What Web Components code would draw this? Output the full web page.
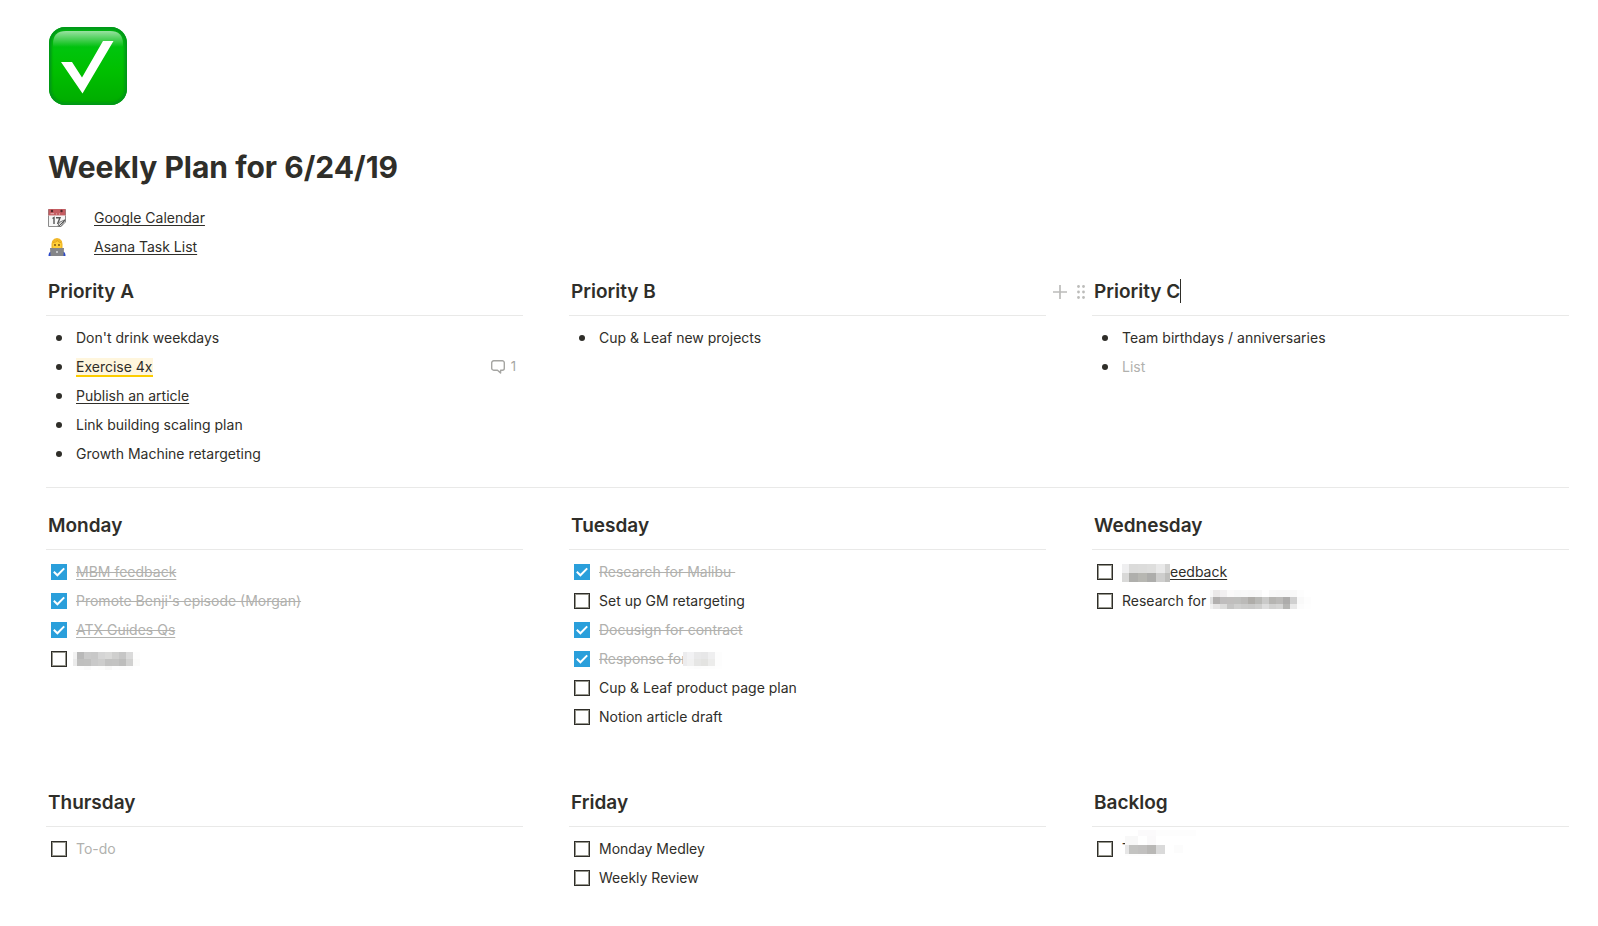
<!DOCTYPE html>
<html lang="en">
<head>
<meta charset="utf-8">
<meta name="viewport" content="width=device-width, initial-scale=1">
<title>Weekly Plan for 6/24/19</title>
<style>
body {
    margin: 0;
    background: #fff;
    color: #2f2e29;
    font: 14px/29px Inter, "Liberation Sans", sans-serif;
    --muted: #b1b1ae;
    --rule: #e9e9e8;
    --blue: #2a9fdb;
}
a {
    color: inherit;
    text-underline-offset: 2px;
    text-decoration-thickness: 1px;
    text-decoration-skip-ink: none;
}
.highlight {
    background: #fff6dd;
    border-bottom: 2px solid #fccd00;
}
.placeholder {
    color: var(--muted);
}
</style>
</head>
<body>

<plan-page>
    <check-icon slot="icon"></check-icon>
    <span slot="title">Weekly Plan for 6/24/19</span>

    <link-row>
        <calendar-icon slot="icon"></calendar-icon>
        <a href="#calendar">Google Calendar</a>
    </link-row>
    <link-row>
        <worker-icon slot="icon"></worker-icon>
        <a href="#asana">Asana Task List</a>
    </link-row>

    <plan-row class="priorities">
        <plan-column>
            <span slot="heading">Priority A</span>
            <bullet-item>Don't drink weekdays</bullet-item>
            <bullet-item><span class="highlight">Exercise 4x</span><comment-count slot="end">1</comment-count></bullet-item>
            <bullet-item><a href="#article">Publish an article</a></bullet-item>
            <bullet-item>Link building scaling plan</bullet-item>
            <bullet-item>Growth Machine retargeting</bullet-item>
        </plan-column>
        <plan-column>
            <span slot="heading">Priority B</span>
            <bullet-item>Cup &amp; Leaf new projects</bullet-item>
        </plan-column>
        <plan-column editing>
            <span slot="heading">Priority C</span>
            <bullet-item>Team birthdays / anniversaries</bullet-item>
            <bullet-item><span class="placeholder">List</span></bullet-item>
        </plan-column>
    </plan-row>

    <section-divider></section-divider>

    <plan-row class="days">
        <plan-column>
            <span slot="heading">Monday</span>
            <todo-item checked><a href="#mbm">MBM feedback</a></todo-item>
            <todo-item checked>Promote Benji's episode (Morgan)</todo-item>
            <todo-item checked><a href="#atx">ATX Guides Qs</a></todo-item>
            <todo-item><pixel-mosaic name="monday"></pixel-mosaic></todo-item>
        </plan-column>
        <plan-column>
            <span slot="heading">Tuesday</span>
            <todo-item checked>Research for Malibu&nbsp;</todo-item>
            <todo-item>Set up GM retargeting</todo-item>
            <todo-item checked>Docusign for contract</todo-item>
            <todo-item checked>Response for<pixel-mosaic name="response"></pixel-mosaic></todo-item>
            <todo-item>Cup &amp; Leaf product page plan</todo-item>
            <todo-item>Notion article draft</todo-item>
        </plan-column>
        <plan-column>
            <span slot="heading">Wednesday</span>
            <todo-item><pixel-mosaic name="feedback"></pixel-mosaic><a href="#feedback">eedback</a></todo-item>
            <todo-item>Research for <pixel-mosaic name="research"></pixel-mosaic></todo-item>
        </plan-column>
    </plan-row>

    <plan-row class="rest">
        <plan-column>
            <span slot="heading">Thursday</span>
            <todo-item><span class="placeholder">To-do</span></todo-item>
        </plan-column>
        <plan-column>
            <span slot="heading">Friday</span>
            <todo-item>Monday Medley</todo-item>
            <todo-item>Weekly Review</todo-item>
        </plan-column>
        <plan-column>
            <span slot="heading">Backlog</span>
            <todo-item>T<pixel-mosaic name="backlog"></pixel-mosaic></todo-item>
        </plan-column>
    </plan-row>
</plan-page>

<script>
class Base extends HTMLElement{

    connectedCallback(){
        if(this.shadowRoot){
            return
        }
        this.$ = this.attachShadow({mode:'open'})
        this.$.innerHTML = this.html
    }
}


class PlanPage extends Base{

    get html(){
        return `
        <main>
            <slot name="icon"></slot>
            <h1><slot name="title"></slot></h1>
            <slot></slot>
        </main>
        <style>
        :host {
            display: block;
        }
        main {
            padding: 27px 29px 20px 46px;
        }
        h1 {
            margin: 43px 2px 17px;
            font-size: 30px;
            line-height: 38px;
            font-weight: 700;
        }
        </style>
        `
    }
}


class LinkRow extends Base{

    get html(){
        return `
        <slot name="icon"></slot>
        <slot></slot>
        <style>
        :host {
            display: grid;
            grid-template-columns: 18px 1fr;
            align-items: center;
            column-gap: 28px;
            min-height: 29px;
            padding: 0 2px;
        }
        </style>
        `
    }
}


class PlanRow extends Base{

    get html(){
        return `
        <slot></slot>
        <style>
        :host {
            display: grid;
            grid-template-columns: repeat(3, minmax(0, 1fr));
            column-gap: 46px;
        }
        :host(.priorities) {
            margin-top: 18px;
        }
        :host(.rest) {
            margin-top: 59px;
        }
        </style>
        `
    }
}


class PlanColumn extends Base{

    get html(){
        const editing = this.hasAttribute('editing')
        return `
        <header>
            ${editing ? this.tools : ''}
            <h2><slot name="heading"></slot></h2>
            ${editing ? '<i class="caret"></i>' : ''}
        </header>
        <div class="list"><slot></slot></div>
        <style>
        :host {
            display: block;
        }
        header {
            position: relative;
            display: flex;
            padding: 0 2px 10px;
            border-bottom: 1px solid var(--rule);
        }
        h2 {
            margin: 0;
            font-size: 19px;
            line-height: 26px;
            font-weight: 600;
        }
        .caret {
            width: 1px;
            height: 24px;
            background: #2f2e29;
        }
        .list {
            padding-top: 7px;
        }
        .tools {
            position: absolute;
            top: 0;
            right: 100%;
            height: 26px;
            display: flex;
            align-items: center;
            gap: 10px;
            padding-right: 7px;
            color: #bcbcba;
        }
        button {
            display: block;
            padding: 0;
            border: 0;
            background: none;
            color: inherit;
            cursor: pointer;
        }
        svg {
            display: block;
        }
        </style>
        `
    }


    get tools(){
        return `
        <div class="tools">
            <button type="button" aria-label="Add block">
                <svg width="14" height="14" viewBox="0 0 14 14" fill="none" stroke="currentColor" stroke-width="1.7"><path d="M7 0v14M0 7h14"/></svg>
            </button>
            <button type="button" aria-label="Drag block">
                <svg width="8" height="14" viewBox="0 0 8 14" fill="currentColor">
                    <circle cx="1.5" cy="1.5" r="1.4"/><circle cx="6.5" cy="1.5" r="1.4"/>
                    <circle cx="1.5" cy="7" r="1.4"/><circle cx="6.5" cy="7" r="1.4"/>
                    <circle cx="1.5" cy="12.5" r="1.4"/><circle cx="6.5" cy="12.5" r="1.4"/>
                </svg>
            </button>
        </div>
        `
    }
}


class BulletItem extends Base{

    get html(){
        return `
        <i></i>
        <div><slot></slot></div>
        <slot name="end"></slot>
        <style>
        :host {
            display: grid;
            grid-template-columns: 22px 1fr auto;
            align-items: center;
            column-gap: 6px;
            min-height: 29px;
            padding: 0 7px 0 2px;
        }
        i {
            width: 6px;
            height: 6px;
            border-radius: 50%;
            background: currentColor;
            justify-self: center;
        }
        </style>
        `
    }
}


class TodoItem extends Base{

    get html(){
        return `
        <label>
            <span class="box">
                <input type="checkbox" ${this.hasAttribute('checked') ? 'checked' : ''}>
                <svg width="12" height="10" viewBox="0 0 12 10" fill="none" stroke="#fff" stroke-width="2"><path d="M.8 4.8l3.6 3.5L11.2 1.4"/></svg>
            </span>
            <span class="text"><slot></slot></span>
        </label>
        <style>
        :host {
            display: block;
            padding: 0 2px;
        }
        label {
            display: grid;
            grid-template-columns: 22px 1fr;
            align-items: center;
            column-gap: 6px;
            min-height: 29px;
        }
        .box {
            display: grid;
            place-items: center;
        }
        .box > * {
            grid-area: 1 / 1;
        }
        input {
            appearance: none;
            box-sizing: border-box;
            width: 16px;
            height: 16px;
            margin: 0;
            border: 1px solid #2f2e29;
            box-shadow: inset 0 0 0 1px #97978e;
        }
        svg {
            display: none;
            pointer-events: none;
        }
        input:checked {
            border-color: var(--blue);
            background: var(--blue);
            box-shadow: none;
        }
        input:checked + svg {
            display: block;
        }
        .box:has(:checked) + .text {
            color: var(--muted);
            text-decoration: line-through 1px;
        }
        </style>
        `
    }
}


class CommentCount extends Base{

    get html(){
        return `
        <button type="button" aria-label="Comments">
            <svg width="14" height="14" viewBox="0 0 14 14" fill="none" stroke="currentColor" stroke-width="1.4" stroke-linejoin="round"><path d="M2.7.8h8.6a2 2 0 0 1 2 2v5.4a2 2 0 0 1-2 2H9.6v2.9L6.5 10.2H2.7a2 2 0 0 1-2-2V2.8a2 2 0 0 1 2-2z"/></svg>
            <slot></slot>
        </button>
        <style>
        button {
            display: flex;
            align-items: center;
            gap: 6px;
            padding: 0;
            border: 0;
            background: none;
            color: #a5a5a2;
            font: inherit;
            font-size: 13px;
            cursor: pointer;
        }
        </style>
        `
    }
}


class SectionDivider extends Base{

    get html(){
        return `
        <hr>
        <style>
        :host {
            display: block;
            padding: 19px 0 25px;
        }
        hr {
            margin: 0;
            border: 0;
            border-top: 1px solid var(--rule);
        }
        </style>
        `
    }
}


// [x, y, width, height, colors from left to right]
const mosaics = {
    monday: {width: 60, rows: [
        [-3, 0, 4, 7, 'f2f2f2'], [-3, 7, 4, 7, 'ebebeb'],
        [1, 0, 7, 7, 'b9b9b9 cacaca c8c8c8 d5d5d5 d9d9d8 cfcfce c6c6c6 dadada fdfdfd'],
        [1, 7, 7, 7, 'bfbfbe c0c0bf c9c9c9 cdcdcc c2c2c1 c3c3c2 bdbdbc d1d1d0 fbfbfa'],
        [1, 14, 7, 4, 'fdfdfd fafafa fefefe fdfdfc f8f8f7 fdfdfd fcfcfc fdfdfd'],
    ]},
    response: {width: 36, rows: [
        [-4, 0, 4, 14, 'ececee'],
        [0, 0, 7, 7, 'f2f2f4 e9e9ea e7e7e8 efeff0 fdfdfd'],
        [0, 7, 7, 7, 'f1f1f1 e6e6e5 e3e3e1 ececeb fdfdfd'],
        [0, 14, 7, 3, 'fdfdfd fcfcfc fdfdfd fdfdfd fefefe'],
    ]},
    feedback: {width: 48, rows: [
        [0, -1, 7, 9, 'efeff0'], [7, -1, 9, 9, 'dbdbda dcdcdb dededd'], [34, -1, 9, 9, 'e9e9e9'], [43, -1, 5, 9, 'd4d4d3'],
        [0, 8, 7, 9, 'd9d9d8'], [7, 8, 9, 9, 'afafac b7b7b2 adadab'], [34, 8, 9, 9, 'cececd'], [43, 8, 5, 9, 'bebebc'],
    ]},
    research: {width: 98, rows: [
        [0, -4, 3, 7, 'f8f8f8'], [3, -4, 7, 7, 'ebe9e9 f2f0f1 fbfafa f8f8f8 f9f9f9 f8f8f8 f9f9f9 ffffff f9f9f9 f8f8f8 f8f8f8 f9f9f9 fdfdfd'],
        [0, 3, 3, 7, 'e0e0e0'], [3, 3, 7, 7, 'b2b0af bfbdbd c0bebd bfbfbd bbbab8 afada9 b9b9b6 cacac9 b6b5b2 bbbab8 adacab d0d0d0 f9f9f9 fdfdfd'],
        [0, 10, 3, 5, 'f1f1f1'], [3, 10, 7, 5, 'e6e5e5 dcdcdb c5c5c4 cfcfce cbcbca c9c9c8 cececd dddddd d1d1d0 d5d5d4 b6b6b4 e9e9e9 fcfcfc fefefe'],
    ]},
    backlog: {width: 72, rows: [
        [-6, -6, 62, 25, 'ffffff'],
        [7, -12, 18, 6, 'fbfafb'], [-6, -6, 13, 9, 'f8f8f8'], [16, -6, 9, 9, 'faf9fa'], [25, -12, 40, 6, 'fdfdfd'],
        [-6, 3, 4, 9, 'e6e6e6'], [-2, 3, 9, 9, 'c3c3c1 c1c0bf b9b8b6 dadada'], [43, 3, 9, 8, 'fcfcfc'],
        [-6, 12, 36, 2, 'fdfdfd'],
    ]},
}


class PixelMosaic extends Base{

    get html(){
        const {width, rows} = mosaics[this.getAttribute('name')]
        let rects = ''

        for(const [x, y, w, h, colors] of rows){
            colors.split(' ').forEach((color, i) => {
                rects += `<rect x="${x + i * w}" y="${y}" width="${w}" height="${h}" fill="#${color}"/>`
            })
        }

        return `
        <svg width="${width}" height="14" shape-rendering="crispEdges" aria-hidden="true">${rects}</svg>
        <style>
        :host {
            display: inline-block;
            height: 14px;
            vertical-align: -2px;
            line-height: 0;
        }
        svg {
            display: block;
            overflow: visible;
        }
        </style>
        `
    }
}


class CheckIcon extends Base{

    get html(){
        return `
        <svg width="78" height="78" viewBox="0 0 78 78" aria-hidden="true">
            <defs>
                <linearGradient id="face" x1="0" y1="0" x2="0" y2="1">
                    <stop offset="0" stop-color="#00b416"/>
                    <stop offset=".3" stop-color="#00c40c"/>
                    <stop offset=".55" stop-color="#00c000"/>
                    <stop offset="1" stop-color="#00ab00"/>
                </linearGradient>
                <linearGradient id="shine" x1="0" y1="0" x2="0" y2="1">
                    <stop offset="0" stop-color="#fff" stop-opacity=".6"/>
                    <stop offset="1" stop-color="#fff" stop-opacity="0"/>
                </linearGradient>
                <filter id="soft"><feGaussianBlur stdDeviation="1"/></filter>
                <clipPath id="edge"><rect width="78" height="78" rx="16"/></clipPath>
            </defs>
            <g clip-path="url(#edge)">
                <rect width="78" height="78" fill="url(#face)"/>
                <rect x=".5" y=".5" width="77" height="77" rx="16" fill="none" stroke="#009614" stroke-width="4" filter="url(#soft)"/>
                <path d="M4 20V17Q4 4 17 4H61Q74 4 74 17V20Z" fill="url(#shine)"/>
            </g>
            <path d="M12 35H23L33 50.500L54 14H64.500L33.500 66.500Z" fill="#fff"/>
        </svg>
        <style>
        :host {
            display: block;
            padding: 0 3px;
        }
        svg {
            display: block;
        }
        </style>
        `
    }
}


class CalendarIcon extends Base{

    get html(){
        return `
        <svg width="18" height="18" viewBox="0 0 18 18" aria-hidden="true">
            <path d="M.5.5H17.500V13L13 17.500H.5Z" fill="#f6f6f6" stroke="#8b8b8b"/>
            <path d="M.5 0H17.500V6.500H.5Z" fill="#c55d62"/>
            <path d="M.5 6.500H17.500" stroke="#dfb5b6"/>
            <path d="M2.500 4.700H6M8 5H9M11 5H12" stroke="#e8b8b8"/>
            <circle cx="4" cy="2" r="1.200" fill="#51272a"/><circle cx="13.500" cy="2" r="1.200" fill="#51272a"/>
            <path d="M4.500 9.500L6 8.500V15M8 8.700H12L9.500 15" fill="none" stroke="#555" stroke-width="1.400"/>
            <path d="M17.500 10.500L11 13.500L10 17.500H13Z" fill="#ddd" stroke="#777"/>
            <path d="M11 17L17 11" stroke="#555"/>
        </svg>
        <style>
        svg {
            display: block;
        }
        </style>
        `
    }
}


class WorkerIcon extends Base{

    get html(){
        return `
        <svg width="18" height="18" viewBox="0 0 18 18" aria-hidden="true">
            <path d="M.5 18Q.5 14 3 13.500H15Q17.500 14 17.500 18Z" fill="#2b49c8"/>
            <path d="M3.500 11Q2.500 0 9 0Q15.500 0 14.500 11Z" fill="#f0b729"/>
            <path d="M4.800 8Q4.500 3.500 8 3.500Q12 2.500 13.200 5V9Q12 12 9 12Q5.500 12 4.800 8Z" fill="#ffcf38"/>
            <path d="M5 4.500Q8 4.500 9.500 2.500Q10.500 4.500 13 4.700" fill="none" stroke="#e5a51c"/>
            <circle cx="7" cy="7" r=".9" fill="#70480f"/><circle cx="11" cy="7" r=".9" fill="#70480f"/>
            <path d="M2 10H16L15.500 18H2.500Z" fill="#858688"/>
            <circle cx="9" cy="14" r="1" fill="#d8dadc"/>
        </svg>
        <style>
        svg {
            display: block;
        }
        </style>
        `
    }
}


customElements.define('plan-page', PlanPage)
customElements.define('link-row', LinkRow)
customElements.define('plan-row', PlanRow)
customElements.define('plan-column', PlanColumn)
customElements.define('bullet-item', BulletItem)
customElements.define('todo-item', TodoItem)
customElements.define('comment-count', CommentCount)
customElements.define('section-divider', SectionDivider)
customElements.define('pixel-mosaic', PixelMosaic)
customElements.define('check-icon', CheckIcon)
customElements.define('calendar-icon', CalendarIcon)
customElements.define('worker-icon', WorkerIcon)
</script>
</body>
</html>
